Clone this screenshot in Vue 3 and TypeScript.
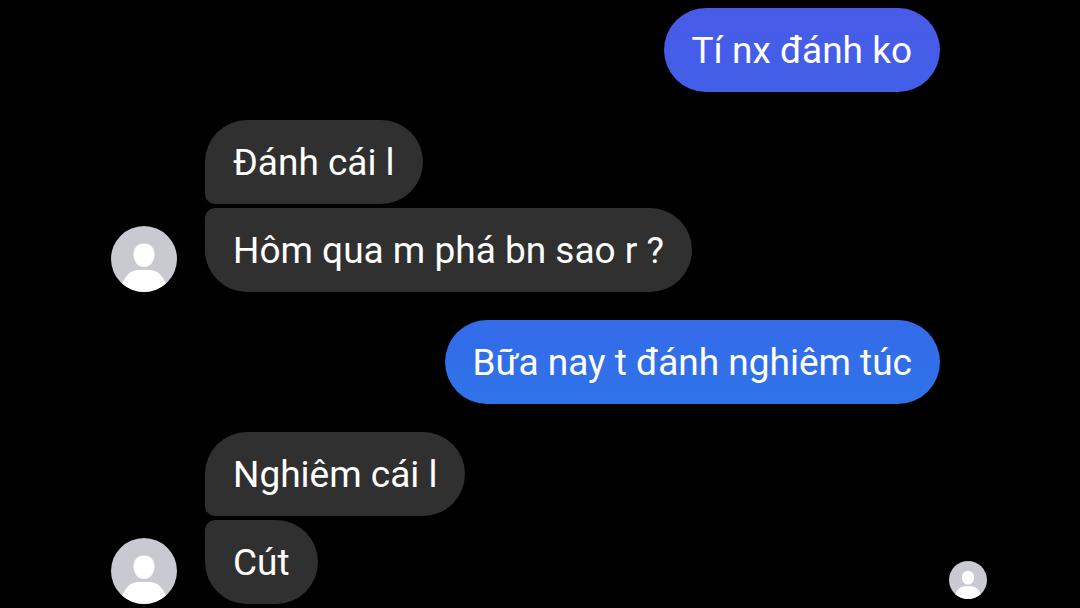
<script setup lang="ts">
interface Group {
  id: number
  own: boolean
  tone?: 'indigo' | 'blue'
  seen?: boolean
  messages: string[]
}

const groups: Group[] = [
  { id: 1, own: true, tone: 'indigo', messages: ['Tí nx đánh ko'] },
  { id: 2, own: false, messages: ['Đánh cái l', 'Hôm qua m phá bn sao r ?'] },
  { id: 3, own: true, tone: 'blue', messages: ['Bữa nay t đánh nghiêm túc'] },
  { id: 4, own: false, seen: true, messages: ['Nghiêm cái l', 'Cút'] },
]
</script>

<template>
  <main class="chat">
    <section v-for="group in groups" :key="group.id" class="group" :class="{ own: group.own }">
      <svg v-if="!group.own" class="avatar" viewBox="0 0 66 66" aria-hidden="true">
        <circle cx="33" cy="33" r="33" fill="#c9cad1" />
        <path d="M33 17.500C39.500 17.500 43.500 22 43.500 28.500C43.500 35.500 39 41 33 41C27 41 22.500 35.500 22.500 28.500C22.500 22 26.500 17.500 33 17.500Z" fill="#fff" />
        <path d="M11 57.600C15 49 20 44 27 44H39C46 44 51 49 55 57.600A33 33 0 0 1 11 57.600Z" fill="#fff" />
      </svg>
      <div class="messages">
        <p v-for="message in group.messages" :key="message" class="bubble" :class="group.tone">{{ message }}</p>
      </div>
      <svg v-if="group.seen" class="avatar seen" viewBox="0 0 66 66" aria-hidden="true">
        <circle cx="33" cy="33" r="33" fill="#c9cad1" />
        <path d="M33 17.500C39.500 17.500 43.500 22 43.500 28.500C43.500 35.500 39 41 33 41C27 41 22.500 35.500 22.500 28.500C22.500 22 26.500 17.500 33 17.500Z" fill="#fff" />
        <path d="M11 57.600C15 49 20 44 27 44H39C46 44 51 49 55 57.600A33 33 0 0 1 11 57.600Z" fill="#fff" />
      </svg>
    </section>
  </main>
</template>

<style>
body {
  margin: 0;
  background: #000;
}
</style>

<style scoped>
.chat {
  box-sizing: border-box;
  min-height: 100vh;
  padding: 8px 93px 4px 111px;
  display: flex;
  flex-direction: column;
  gap: 28px;
  background: #000;
  font-family: Roboto, "Noto Sans", sans-serif;
}

.group {
  display: flex;
  align-items: flex-end;
  gap: 28px;
}

.group.own {
  justify-content: flex-end;
  padding-right: 47px;
}

.messages {
  display: flex;
  flex-direction: column;
  align-items: flex-start;
  gap: 4px;
}

.bubble {
  margin: 0;
  padding: 21px 28px 19px;
  border-radius: 42px;
  background: #303030;
  color: #fff;
  font-size: 37px;
  line-height: 44px;
}

.group:not(.own) .bubble:first-child {
  border-bottom-left-radius: 10px;
}

.group:not(.own) .bubble:last-child {
  border-top-left-radius: 10px;
}

.bubble.indigo {
  background: linear-gradient(#485be8, #425fe8);
}

.bubble.blue {
  background: linear-gradient(#346be9, #2f73e9);
}

.avatar {
  flex: none;
  width: 66px;
  height: 66px;
}

.avatar.seen {
  width: 38px;
  height: 38px;
  margin-left: auto;
  margin-bottom: 5px;
}
</style>
